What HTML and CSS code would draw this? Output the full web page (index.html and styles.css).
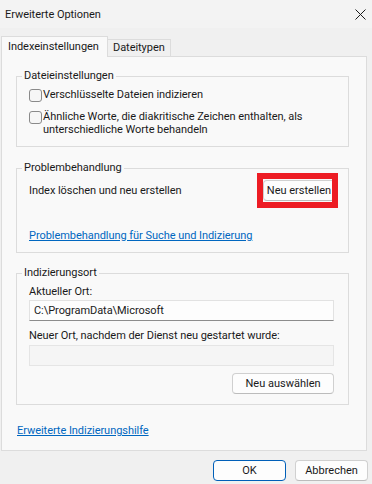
FILE: index.html
```html
<!DOCTYPE html>
<html lang="de">
<head>
<meta charset="utf-8">
<title>Erweiterte Optionen</title>
<link rel="stylesheet" href="styles.css">
</head>
<body>
<div class="dialog">
  <div class="titlebar">
    <span class="title">Erweiterte Optionen</span>
    <svg class="close" width="11" height="11" viewBox="0 0 11 11"><path d="M0.5 0.5 L10.5 10.5 M10.5 0.5 L0.5 10.5" stroke="#1b1b1b" stroke-width="1" fill="none"/></svg>
  </div>
  <div class="tabs">
    <div class="tab active">Indexeinstellungen</div>
    <div class="tab">Dateitypen</div>
  </div>
  <div class="panel">
    <fieldset class="group g1">
      <legend>Dateieinstellungen</legend>
      <div class="check row1"><span class="box"></span><span>Verschlüsselte Dateien indizieren</span></div>
      <div class="check row2"><span class="box"></span><span class="multi">Ähnliche Worte, die diakritische Zeichen enthalten, als<br>unterschiedliche Worte behandeln</span></div>
    </fieldset>
    <fieldset class="group g2">
      <legend>Problembehandlung</legend>
      <div class="rebuild">
        <span>Index löschen und neu erstellen</span>
        <div class="hl-wrap">
          <button class="btn btn-rebuild">Neu erstellen</button>
          <span class="highlight"></span>
        </div>
      </div>
      <a class="link trouble" href="#">Problembehandlung für Suche und Indizierung</a>
    </fieldset>
    <fieldset class="group g3">
      <legend>Indizierungsort</legend>
      <div class="label l1">Aktueller Ort:</div>
      <div class="textbox">C:\ProgramData\Microsoft</div>
      <div class="label l2">Neuer Ort, nachdem der Dienst neu gestartet wurde:</div>
      <div class="textbox disabled"></div>
      <div class="select-row"><button class="btn btn-select">Neu auswählen</button></div>
    </fieldset>
    <a class="link help" href="#">Erweiterte Indizierungshilfe</a>
  </div>
  <div class="footer">
    <button class="btn btn-ok">OK</button>
    <button class="btn btn-cancel">Abbrechen</button>
  </div>
</div>
</body>
</html>
```
FILE: styles.css
```css
html, body {
  margin: 0;
  padding: 0;
}
body {
  width: 372px;
  height: 484px;
  background: #f0f0f0;
  font-family: Roboto, "Noto Sans", sans-serif;
  font-size: 11px;
  line-height: 14px;
  letter-spacing: -0.05px;
  color: #1a1a1a;
  overflow: hidden;
  white-space: nowrap;
}
.dialog {
  width: 372px;
  height: 484px;
}
.titlebar {
  height: 28px;
  background: #f3f3f3;
  display: flex;
  align-items: center;
  justify-content: space-between;
  padding: 0 6px 0 5px;
}
.title {
  margin-top: 2px;
}
.tabs {
  display: flex;
  align-items: flex-end;
  height: 20px;
  margin-top: 8px;
  padding-left: 1px;
}
.tab {
  box-sizing: border-box;
  height: 17px;
  border: 1px solid #dcdcdc;
  border-bottom: none;
  border-left: none;
  padding: 0 5px;
  line-height: 16px;
  background: #f0f0f0;
}
.tab.active {
  height: 21px;
  margin-bottom: -1px;
  border-left: 1px solid #dcdcdc;
  background: #f9f9f9;
  position: relative;
  z-index: 1;
  padding: 2px 6px 0 6px;
  width: 107px;
}
.panel {
  box-sizing: border-box;
  margin-left: 1px;
  width: 366px;
  height: 395px;
  border: 1px solid #dcdcdc;
  background: #f9f9f9;
  padding: 11px 17px 0 14px;
}
.group {
  margin: 0;
  padding: 0 14px 0 12px;
  border: 1px solid #dcdcdc;
  min-width: 0;
}
.group legend {
  padding: 0 2px;
  margin-left: -7px;
  line-height: 16px;
}
.g1 { padding-bottom: 10px; }
.g2 { margin-top: 13px; padding-bottom: 9px; }
.g3 { margin-top: 12px; padding-bottom: 10px; }
.check {
  display: flex;
  align-items: flex-start;
  gap: 1px;
}
.row1 { margin-top: 4px; }
.row2 { margin-top: 8px; }
.box {
  box-sizing: border-box;
  flex: none;
  width: 13px;
  height: 13px;
  border: 1px solid #8a8a8a;
  border-radius: 3px;
  background: #f6f6f6;
  margin-top: 1px;
}
.multi {
  line-height: 13px;
}
.rebuild {
  display: flex;
  align-items: center;
  justify-content: space-between;
  margin-top: 4px;
}
.hl-wrap {
  position: relative;
  margin-right: -1px;
}
.btn {
  box-sizing: border-box;
  font-family: inherit;
  font-size: 11px;
  line-height: 14px;
  color: #1a1a1a;
  background: #fdfdfd;
  border: 1px solid #d0d0d0;
  border-bottom-color: #bcbcbc;
  border-radius: 4px;
  padding: 0;
  margin: 0;
  height: 21px;
  white-space: nowrap;
}
.btn-rebuild {
  display: block;
  width: 72px;
}
.highlight {
  position: absolute;
  left: -6px;
  top: -7px;
  width: 81px;
  height: 35px;
  box-sizing: border-box;
  border: 6px solid #ed1c24;
}
.link {
  display: block;
  color: #0067c0;
  text-decoration: underline;
  width: max-content;
}
.trouble { margin-top: 28px; }
.l1 { margin-top: 4px; }
.l2 { margin-top: 8px; }
.textbox {
  box-sizing: border-box;
  height: 21px;
  margin-top: 1px;
  border: 1px solid #e2e2e2;
  border-bottom-color: #8c8c8c;
  background: #fdfdfd;
  padding: 0 4px;
  line-height: 19px;
}
.textbox.disabled {
  margin-top: 2px;
  background: #f5f5f5;
  border-color: #e5e5e5;
}
.select-row {
  display: flex;
  justify-content: flex-end;
  margin-top: 7px;
}
.btn-select { width: 102px; }
.help {
  margin-top: 19px;
  margin-left: 1px;
}
.footer {
  display: flex;
  justify-content: flex-end;
  gap: 9px;
  padding: 9px 4px 0 0;
}
.btn-ok, .btn-cancel { width: 73px; height: 21px; }
.btn-ok {
  border: 1px solid #005fb8;
}
```
